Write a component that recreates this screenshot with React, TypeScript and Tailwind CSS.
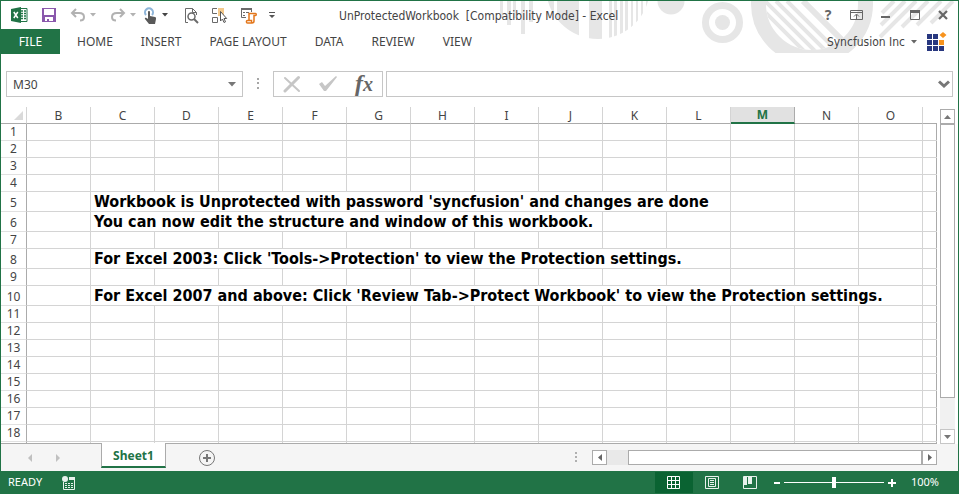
import type { ReactNode } from "react";

const COLUMNS = ["B", "C", "D", "E", "F", "G", "H", "I", "J", "K", "L", "M", "N", "O"];
const ACTIVE_COLUMN = "M";
const RIBBON_TABS = ["HOME", "INSERT", "PAGE LAYOUT", "DATA", "REVIEW", "VIEW"];

type Message = { text: string; span: number };

const MESSAGES: Record<number, Message> = {
  5: { text: "Workbook is Unprotected with password 'syncfusion' and changes are done", span: 10 },
  6: { text: "You can now edit the structure and window of this workbook.", span: 8 },
  8: { text: "For Excel 2003: Click 'Tools->Protection' to view the Protection settings.", span: 10 },
  10: { text: "For Excel 2007 and above: Click 'Review Tab->Protect Workbook' to view the Protection settings.", span: 13 },
};

function IconButton({ label, className = "", children }: { label: string; className?: string; children: ReactNode }) {
  return (
    <button type="button" aria-label={label} className={`flex shrink-0 items-center justify-center ${className}`}>
      {children}
    </button>
  );
}

function Caret({ color }: { color: string }) {
  return (
    <svg width="6" height="4" viewBox="0 0 6 4">
      <path d="M0 0h6L3 3.5z" fill={color} />
    </svg>
  );
}

function HeaderPattern() {
  return (
    <svg className="absolute right-0 top-0" width="460" height="52" viewBox="498 0 460 52" fill="#e6e6e6">
      <defs>
        <clipPath id="disc">
          <circle cx="598" cy="-14" r="52" />
        </clipPath>
        <clipPath id="hole">
          <circle cx="812" cy="3" r="46" />
        </clipPath>
      </defs>
      <path d="M500 0h3v17h-3zM507 0h4v24h-4zM513 0h3v17h-3zM521 0h4v33h-4zM529 0h4v21h-4z" />
      <path
        clipPath="url(#disc)"
        d="M547 0h7v40h-7zM557 0h22v40h-22zM589 0h13v40h-13zM609 0h3v40h-3zM614 0h3v40h-3zM620 0h3v40h-3zM625 0h3v40h-3zM631 0h2v40h-2zM636 0h2v40h-2zM641 0h2v40h-2zM646 0h3v40h-3z"
      />
      <circle cx="671" cy="0" r="13.5" />
      <circle cx="722.5" cy="21.5" r="17" fill="none" stroke="#e6e6e6" strokeWidth="7" />
      <circle cx="722.5" cy="21.5" r="7.5" />
      <circle cx="812" cy="3" r="53.5" fill="none" stroke="#e6e6e6" strokeWidth="15" />
      <g clipPath="url(#hole)" stroke="#e6e6e6" fill="none">
        <path strokeWidth="4" d="M754 0l56 56M765 0l56 56M776 0l56 56M787 0l56 56" />
        <path strokeWidth="6" d="M803 0l56 56" />
      </g>
      <g stroke="#e6e6e6" strokeWidth="4" fill="none">
        <path d="M894 0l-12 12M905 0l-24 24M916 0l-36 36M928 0l-26 26M941 0l-24 24M953 0l-22 22" />
      </g>
    </svg>
  );
}

function QuickAccess() {
  return (
    <div className="flex h-7 items-center">
      <svg className="ml-2.5" width="17" height="16" viewBox="0 0 17 16">
        <path d="M9 1.500h7v13H9z" fill="#fff" stroke="#217346" />
        <path d="M10 4h2M13 4h2M10 6.500h2M13 6.500h2M10 9h2M13 9h2M10 11.500h2M13 11.500h2" stroke="#217346" strokeWidth="1.500" />
        <path d="M0 2l10-2v16L0 14z" fill="#217346" />
        <path d="M2.800 5l4 6M6.800 5l-4 6" stroke="#fff" strokeWidth="1.500" />
      </svg>
      <IconButton label="Save" className="ml-3.5">
        <svg width="14" height="14" viewBox="0 0 14 14">
          <path d="M0 0h14v14H0z" fill="#8a58ac" />
          <path d="M2 1h10v6H2zM3 9h8v4H7v-2H5v2H3z" fill="#fff" />
        </svg>
      </IconButton>
      <IconButton label="Undo" className="ml-3.5">
        <svg width="16" height="14" viewBox="0 0 16 14" fill="none" stroke="#b2b2b2" strokeWidth="2">
          <path d="M6 1L2 5l4 4M2 5h7c3 0 5 1.500 5 4s-2 3.500-4 3.500" />
        </svg>
      </IconButton>
      <IconButton label="Undo history" className="ml-1">
        <Caret color="#b2b2b2" />
      </IconButton>
      <IconButton label="Redo" className="ml-3.5">
        <svg width="16" height="14" viewBox="0 0 16 14" fill="none" stroke="#b2b2b2" strokeWidth="2">
          <path d="M10 1l4 4-4 4M14 5H7C4 5 2 6.500 2 9s2 3.500 4 3.500" />
        </svg>
      </IconButton>
      <IconButton label="Redo history" className="ml-1">
        <Caret color="#b2b2b2" />
      </IconButton>
      <IconButton label="Touch/Mouse Mode" className="ml-2">
        <svg width="14" height="17" viewBox="0 0 14 17">
          <path d="M2 8a4 4 0 1 1 6 0" fill="none" stroke="#8db4d8" strokeWidth="2" />
          <path d="M4 5c0-1.300 2-1.300 2 0v4l5 1c1 .3 1.200 1 1 2l-1 5H5l-4-5c-.6-1 .5-1.800 1.500-1L4 12z" fill="#595959" />
        </svg>
      </IconButton>
      <IconButton label="Touch/Mouse options" className="ml-1">
        <Caret color="#444" />
      </IconButton>
      <IconButton label="Print Preview" className="ml-4">
        <svg width="15" height="17" viewBox="0 0 15 17" fill="none" stroke="#6a6a6a">
          <path d="M4 15.500H1.500V1.500h7l4 4V8M8.500 1.500v4h4" />
          <circle cx="7.500" cy="9.500" r="3.500" strokeWidth="1.500" />
          <path d="M10 12l4 4" strokeWidth="2" />
        </svg>
      </IconButton>
      <IconButton label="Select Objects" className="ml-3">
        <svg width="17" height="17" viewBox="0 0 17 17">
          <path d="M7 1h6v8H7z" fill="#f3c98c" />
          <path d="M6 1.500H1.500v5H6M1.500 10.500h5v5h-5z" fill="none" stroke="#6a6a6a" />
          <path d="M9.500 4.500v9.500l2-2 1.500 3.500 1.500-.7-1.500-3.300h2.700z" fill="#fff" stroke="#555" />
        </svg>
      </IconButton>
      <IconButton label="View Macros" className="ml-3">
        <svg width="17" height="17" viewBox="0 0 17 17" fill="none">
          <path d="M6 10.500H1.500v-9h10V5" stroke="#6a6a6a" />
          <path d="M1 2h11" stroke="#6a6a6a" strokeWidth="2" />
          <path d="M3 5.500h2M6 5.500h3M3 8.500h2" stroke="#6a6a6a" />
          <path d="M9 13V6.500h6.500c1 0 1 2 0 2H14V14c0 2-1 2-2 2H7.500c-1.500 0-1.500-2.500 0-2.500H11.500c0 1 0 2.500 1 2.500" fill="#fff" stroke="#e3771c" strokeWidth="1.500" />
        </svg>
      </IconButton>
      <IconButton label="Customize Quick Access Toolbar" className="ml-3">
        <svg width="6" height="7" viewBox="0 0 6 7" fill="#555">
          <path d="M0 0h6v1H0zM0 3h6L3 6z" />
        </svg>
      </IconButton>
    </div>
  );
}

function TitleBar() {
  return (
    <div className="relative flex h-7 items-center justify-between">
      <QuickAccess />
      <h1 className="mr-auto ml-16 whitespace-pre pt-0.5 font-['DejaVu_Sans_Condensed','DejaVu_Sans',sans-serif] text-xs text-[#444]">
        {"UnProtectedWorkbook  [Compatibility Mode] - Excel"}
      </h1>
      <div className="flex items-center gap-4 pr-2.5">
        <IconButton label="Help" className="w-3 text-sm font-bold text-[#666]">
          ?
        </IconButton>
        <IconButton label="Ribbon Display Options">
          <svg width="13" height="10" viewBox="0 0 13 10" fill="none" stroke="#666">
            <path d="M.5.5h12v9H.5zM.5 2.500h12M6.500 9V4.500M4 6.500l2.500-2.500L9 6.500" />
          </svg>
        </IconButton>
        <IconButton label="Minimize" className="ml-0.5">
          <svg width="9" height="10" viewBox="0 0 9 10">
            <path d="M0 6h9v2H0z" fill="#666" />
          </svg>
        </IconButton>
        <IconButton label="Restore" className="ml-1">
          <svg width="10" height="10" viewBox="0 0 10 10" fill="none" stroke="#666">
            <path d="M.5 1h9v8.500h-9z" />
            <path d="M0 1.500h10" strokeWidth="3" />
          </svg>
        </IconButton>
        <IconButton label="Close" className="ml-0.5">
          <svg width="10" height="10" viewBox="0 0 10 10">
            <path d="M1 1l8 8M9 1L1 9" stroke="#666" strokeWidth="2.200" />
          </svg>
        </IconButton>
      </div>
    </div>
  );
}

function RibbonTabs() {
  return (
    <div className="relative flex h-[25px] items-center">
      <button type="button" className="h-full w-[59px] bg-[#217346] text-white">
        FILE
      </button>
      <nav className="ml-[17px] flex gap-7">
        {RIBBON_TABS.map((tab) => (
          <button key={tab} type="button">
            {tab}
          </button>
        ))}
      </nav>
      <button
        type="button"
        className="ml-auto flex items-center gap-1.5 font-['DejaVu_Sans_Condensed','DejaVu_Sans',sans-serif]"
      >
        Syncfusion Inc <Caret color="#666" />
      </button>
      <svg className="ml-2.5 mr-[11px]" width="20" height="20" viewBox="0 0 20 20">
        <path
          d="M0 2h5v5H0zM6 2h5v5H6zM0 8h5v5H0zM6 8h5v5H6zM0 14h5v5H0zM6 14h5v5H6zM12 14h5v5h-5z"
          fill="#28377f"
        />
        <path d="M12 8h5v5h-5zM16 0l3.500 3-3.500 3-3.500-3z" fill="#f7931e" />
      </svg>
    </div>
  );
}

function FormulaBar() {
  return (
    <div className="mt-[17px] flex h-[26px] items-stretch px-[5px]">
      <div className="flex w-[237px] items-center border border-[#c6c6c6] pr-1.5">
        <input aria-label="Name Box" defaultValue="M30" className="min-w-0 flex-1 bg-transparent pl-1.5 pt-0.5 outline-none" />
        <IconButton label="Name Box list">
          <svg width="8" height="5" viewBox="0 0 8 5">
            <path d="M0 0h8L4 4.500z" fill="#777" />
          </svg>
        </IconButton>
      </div>
      <svg className="mx-3.5 self-center" width="2" height="12" viewBox="0 0 2 12" fill="#a6a6a6">
        <path d="M0 0h2v2H0zM0 4h2v2H0zM0 9h2v2H0z" />
      </svg>
      <div className="flex w-[110px] items-center justify-between border border-[#c6c6c6] px-[9px]">
        <IconButton label="Cancel">
          <svg width="18" height="18" viewBox="0 0 18 18" fill="none" stroke="#c6c6c6" strokeLinecap="round">
            <path d="M2 3l14 13" strokeWidth="2" />
            <path d="M15.500 2.500L2 16" strokeWidth="3" />
          </svg>
        </IconButton>
        <IconButton label="Enter">
          <svg width="20" height="18" viewBox="0 0 20 18">
            <path d="M1 9l3-2 3 4L18 1l1 1L8 16H6z" fill="#c6c6c6" />
          </svg>
        </IconButton>
        <button
          type="button"
          aria-label="Insert Function"
          className="font-['Liberation_Serif',serif] text-2xl font-bold italic leading-6 text-[#666]"
        >
          f<span className="text-xl">x</span>
        </button>
      </div>
      <div className="ml-[3px] flex min-w-0 flex-1 items-center border border-[#c6c6c6]">
        <input aria-label="Formula Bar" className="min-w-0 flex-1 bg-transparent px-1.5 outline-none" />
        <IconButton label="Expand Formula Bar" className="mr-0.5">
          <svg width="12" height="8" viewBox="0 0 12 8">
            <path d="M1 1.500l5 4.500 5-4.500" fill="none" stroke="#777" strokeWidth="3" />
          </svg>
        </IconButton>
      </div>
    </div>
  );
}

function SheetRow({ row }: { row: number }) {
  const message = MESSAGES[row];
  const tail = message ? COLUMNS.length - 1 - message.span : COLUMNS.length - 1;
  const cell = "border-b border-r border-[#d4d4d4] p-0";
  return (
    <tr className={message ? "h-5" : "h-[17px]"}>
      <th scope="row" className="border-b border-r border-b-[#e1e1e1] border-r-[#ababab] p-0 align-bottom font-normal leading-4">
        {row}
      </th>
      <td className={cell} />
      {message && (
        <td
          colSpan={message.span}
          className="whitespace-nowrap border-b border-r border-[#d4d4d4] p-0 pl-[3px] pt-px font-['DejaVu_Sans_Condensed','DejaVu_Sans',sans-serif] text-base font-bold leading-[18px] text-black"
        >
          {message.text}
        </td>
      )}
      {Array.from({ length: tail }, (_, i) => (
        <td key={i} className={cell} />
      ))}
      <td className="border-b border-[#d4d4d4] p-0" />
    </tr>
  );
}

function Sheet() {
  const rows = Array.from({ length: 18 }, (_, i) => i + 1);
  return (
    <div className="min-w-0 flex-1 border-b border-[#ababab]">
      <table className="w-full table-fixed border-separate border-spacing-0">
        <colgroup>
          <col className="w-[26px]" />
          {COLUMNS.map((c) => (
            <col key={c} className="w-16" />
          ))}
          <col />
        </colgroup>
        <thead>
          <tr className="h-[17px]">
            <td className="border-b border-r border-b-[#ababab] border-r-[#d4d4d4] p-0">
              <svg className="ml-auto mr-[3px]" width="9" height="9" viewBox="0 0 9 9">
                <path d="M9 0v9H0z" fill="#dadada" />
              </svg>
            </td>
            {COLUMNS.map((c) => (
              <th
                key={c}
                scope="col"
                className={
                  c === ACTIVE_COLUMN
                    ? "border-b-2 border-r border-b-[#217346] border-r-[#ababab] bg-[#e1e1e1] p-0 pt-px font-bold leading-[14px] text-[#217346]"
                    : "border-b border-r border-b-[#ababab] border-r-[#d4d4d4] p-0 pt-px font-normal leading-[15px]"
                }
              >
                {c}
              </th>
            ))}
            <td className="border-b border-[#ababab] p-0" />
          </tr>
        </thead>
        <tbody className="shadow-[inset_-1px_0_#ababab]">
          {rows.map((row) => (
            <SheetRow key={row} row={row} />
          ))}
          <tr className="h-px">
            <td className="border-r border-[#ababab] p-0" />
            {COLUMNS.map((c) => (
              <td key={c} className="border-r border-[#d4d4d4] p-0" />
            ))}
            <td className="p-0" />
          </tr>
        </tbody>
      </table>
    </div>
  );
}

function VerticalScroll() {
  return (
    <div className="mx-[3px] mt-0.5 flex w-[15px] shrink-0 flex-col bg-[#f1f1f1]">
      <IconButton label="Scroll up" className="h-[15px] border border-[#ababab] bg-white">
        <svg width="7" height="4" viewBox="0 0 7 4">
          <path d="M0 4h7L3.500 0z" fill="#777" />
        </svg>
      </IconButton>
      <div className="h-[274px] border border-[#ababab] bg-white" />
      <IconButton label="Scroll down" className="mt-auto h-[15px] border border-[#c6c6c6] bg-white">
        <svg width="7" height="4" viewBox="0 0 7 4">
          <path d="M0 0h7L3.500 4z" fill="#777" />
        </svg>
      </IconButton>
    </div>
  );
}

function SheetTabs() {
  return (
    <div className="flex h-[27px] bg-[#f5f5f5]">
      <div className="flex w-[100px] items-center gap-6 pl-[27px]">
        <IconButton label="Previous sheet">
          <svg width="4" height="8" viewBox="0 0 4 8">
            <path d="M4 0v8L0 4z" fill="#c0c0c0" />
          </svg>
        </IconButton>
        <IconButton label="Next sheet">
          <svg width="4" height="8" viewBox="0 0 4 8">
            <path d="M0 0v8l4-4z" fill="#c0c0c0" />
          </svg>
        </IconButton>
      </div>
      <button
        type="button"
        className="-mt-px h-[25px] w-[65px] border-x border-b-2 border-x-[#ababab] border-b-[#217346] bg-white pt-0.5 font-bold text-[#217346]"
      >
        Sheet1
      </button>
      <IconButton label="New sheet" className="ml-8">
        <svg width="18" height="18" viewBox="0 0 18 18" fill="none" stroke="#777">
          <circle cx="9" cy="9" r="7.500" />
          <path d="M9 5v8M5 9h8" strokeWidth="2" />
        </svg>
      </IconButton>
      <div className="ml-auto mr-[21px] flex items-center">
        <svg className="mr-[15px]" width="2" height="11" viewBox="0 0 2 11" fill="#b0b0b0">
          <path d="M0 0h2v2H0zM0 4h2v2H0zM0 8h2v2H0z" />
        </svg>
        <IconButton label="Scroll left" className="h-[15px] w-[15px] border border-[#ababab] bg-white">
          <svg width="4" height="7" viewBox="0 0 4 7">
            <path d="M4 0v7L0 3.500z" fill="#666" />
          </svg>
        </IconButton>
        <div className="h-[15px] w-[21px] bg-[#e9e9e9]" />
        <div className="h-[15px] w-[294px] border border-[#ababab] bg-white" />
        <IconButton label="Scroll right" className="h-[15px] w-[15px] border border-[#ababab] bg-white">
          <svg width="4" height="7" viewBox="0 0 4 7">
            <path d="M0 0v7l4-3.500z" fill="#666" />
          </svg>
        </IconButton>
      </div>
    </div>
  );
}

function StatusBar() {
  return (
    <footer className="flex h-[23px] items-center bg-[#217346] text-[11px] text-white">
      <span className="ml-2">READY</span>
      <IconButton label="Record Macro" className="ml-5">
        <svg width="13" height="14" viewBox="0 0 13 14" fill="none" stroke="#e8f1ec">
          <path d="M1.500 6v7.500h11V2" />
          <path d="M7 2.500h6" strokeWidth="3" />
          <path d="M3 7.500h2M6 7.500h2M9 7.500h2M3 9.500h2M6 9.500h2M9 9.500h2M3 11.500h2M6 11.500h2M9 11.500h2" />
          <circle cx="3" cy="3" r="3" fill="#e8f1ec" stroke="none" />
        </svg>
      </IconButton>
      <div className="ml-auto flex h-full items-center">
        <IconButton label="Normal" className="h-[21px] w-[38px] bg-[#0a6332]">
          <svg width="13" height="13" viewBox="0 0 13 13" fill="none" stroke="#fff">
            <path d="M.5.5h12v12H.5zM4.500 0v13M8.500 0v13M0 4.500h13M0 8.500h13" />
          </svg>
        </IconButton>
        <IconButton label="Page Layout" className="w-[38px]">
          <svg width="14" height="13" viewBox="0 0 14 13" fill="none" stroke="#e8f1ec">
            <path d="M.5.5h13v12H.5zM3.500 2.500h7v8h-7zM5 4.500h4M5 6.500h4M5 8.500h4" />
          </svg>
        </IconButton>
        <IconButton label="Page Break Preview" className="w-[38px]">
          <svg width="14" height="13" viewBox="0 0 14 13">
            <path d="M.5.5h13v12H.5z" fill="none" stroke="#e8f1ec" />
            <path d="M1 1h3v8H1zM5 1h4v7H5z" fill="#e8f1ec" />
          </svg>
        </IconButton>
        <IconButton label="Zoom out" className="ml-[5px]">
          <svg width="6" height="8" viewBox="0 0 6 8">
            <path d="M0 3h6v2H0z" fill="#fff" />
          </svg>
        </IconButton>
        <input
          type="range"
          aria-label="Zoom"
          min="0"
          max="200"
          defaultValue="100"
          className="mx-1 h-3 w-[100px] appearance-none bg-[linear-gradient(#fff,#fff)] bg-[length:100%_1px] bg-center bg-no-repeat [&::-webkit-slider-thumb]:h-[11px] [&::-webkit-slider-thumb]:w-1 [&::-webkit-slider-thumb]:appearance-none [&::-webkit-slider-thumb]:bg-white"
        />
        <IconButton label="Zoom in">
          <svg width="8" height="8" viewBox="0 0 8 8">
            <path d="M0 3h8v2H0zM3 0h2v8H3z" fill="#fff" />
          </svg>
        </IconButton>
        <span className="ml-[15px] mr-5">100%</span>
      </div>
    </footer>
  );
}

export default function App() {
  return (
    <div className="flex flex-col overflow-hidden bg-white font-['Noto_Sans',sans-serif] text-xs text-[#444]">
      <div className="border-x border-t border-[#217346]">
        <header className="relative">
          <HeaderPattern />
          <TitleBar />
          <RibbonTabs />
        </header>
        <FormulaBar />
        <main className="mt-[10px] flex">
          <Sheet />
          <VerticalScroll />
        </main>
        <SheetTabs />
      </div>
      <StatusBar />
    </div>
  );
}
